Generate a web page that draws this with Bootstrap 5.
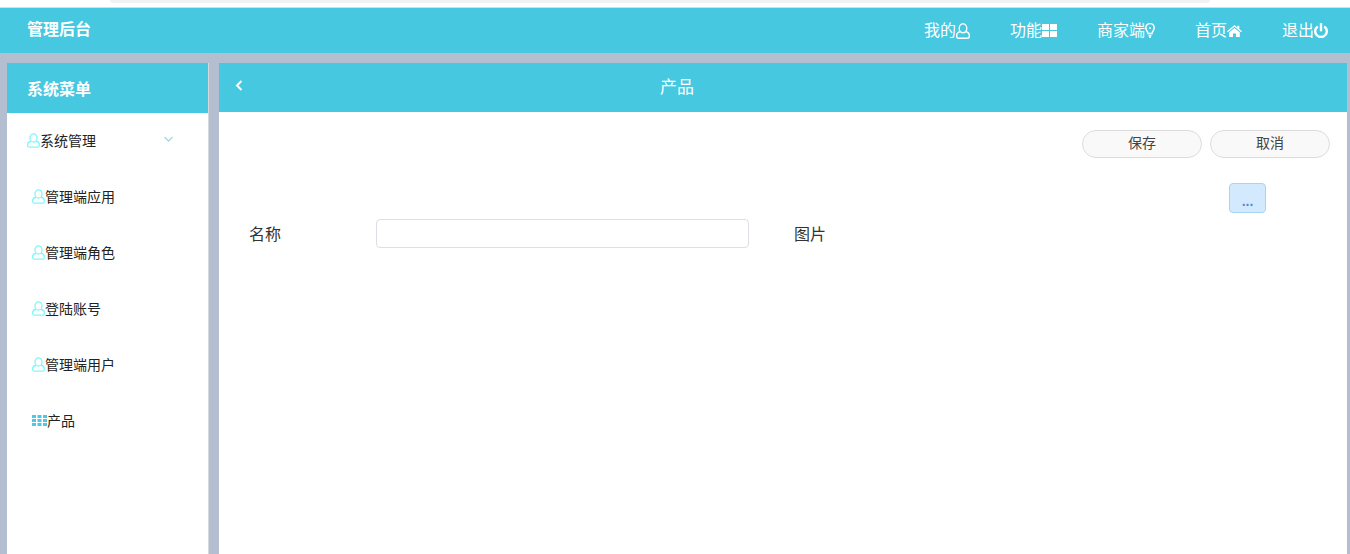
<!DOCTYPE html>
<html lang="zh-CN">
<head>
    <meta charset="UTF-8">
    <title>管理后台</title>
    <link rel="stylesheet" href="https://cdn.jsdelivr.net/npm/bootstrap@5.3.0/dist/css/bootstrap.min.css">
    <style>
        html, body { height: 554px; overflow: hidden; }
        body { background: #b3bfd1; font-family: "Liberation Sans", "Noto Sans CJK SC", sans-serif; color: #333; }
        .top-strip { height: 8px; background: #fff; border-bottom: 1px solid #d9dde0; }
        .top-tab { width: 1100px; height: 3px; margin-left: 110px; background: #f1f2f5; border-radius: 0 0 8px 8px; }
        .app-bar { height: 45px; background: #45c8e0; color: #fff; padding: 0 22px 0 27px; }
        .app-title { font-size: 16px; font-weight: 700; margin-bottom: 2px; }
        .app-links { gap: 40px; font-size: 16px; }
        .app-links svg { display: block; flex-shrink: 0; }
        .page-body { height: 501px; padding: 10px 3px 0 7px; gap: 10px; }
        .side-panel { width: 202px; background: #fff; border-right: 1px solid #d5d8dc; }
        .side-head { height: 50px; padding: 3px 0 0 20px; background: #45c8e0; color: #fff; font-size: 16px; font-weight: 700; }
        .side-item { height: 56px; font-size: 14px; color: #222; padding-left: 25px; }
        .side-item svg { flex-shrink: 0; margin-bottom: 2px; }
        .side-item.top-level { padding-left: 20px; padding-right: 35px; }
        .main-panel { background: #fff; min-width: 0; }
        .main-head { height: 49px; background: #45c8e0; color: #fff; font-size: 17px; padding-left: 16px; }
        .main-title { width: 868px; text-align: center; }
        .act-row { gap: 8px; padding: 18px 17px 0 0; }
        .pill-btn { width: 120px; height: 28px; padding: 0 0 2px; font-size: 14px; color: #444; background: #f9f9f9; border: 1px solid #dcdcdc; border-radius: 14px; }
        .form-area { padding: 25px 81px 0 30px; }
        .more-btn { width: 37px; height: 30px; padding: 5px 0 0; font-size: 14px; font-weight: 700; line-height: 1; color: #4a90d9; background: #d3e9fd; border: 1px solid #a9d3f5; border-radius: 4px; }
        .field-row { margin-top: 6px; }
        .field-label { font-size: 16px; color: #333; padding-top: 2px; }
        .name-label { width: 127px; }
        .name-input { width: 373px; height: 29px; padding: 4px 10px; border: 1px solid #dcdfe3; border-radius: 4px; }
        .pic-label { margin-left: 45px; }
    </style>
</head>
<body>
    <div class="top-strip"><div class="top-tab"></div></div>

    <div class="app-bar d-flex align-items-center justify-content-between">
        <div class="app-title">管理后台</div>
        <div class="app-links d-flex align-items-center">
            <div class="d-flex align-items-center">我的
                <svg width="14" height="16" viewBox="0 0 14 16" fill="none" stroke="#fff" stroke-width="1.400"><ellipse cx="7" cy="5.300" rx="3.800" ry="4.500"/><path d="M4.300 8.800C2 9.200 .7 10.500 .7 12.300v1c0 1 .7 1.900 1.800 1.900h9c1.100 0 1.800-.9 1.800-1.900v-1c0-1.800-1.300-3.100-3.600-3.500"/></svg>
            </div>
            <div class="d-flex align-items-center">功能
                <svg width="15" height="13" viewBox="0 0 15 13" fill="#fff"><rect width="7" height="6"/><rect x="8" width="7" height="6"/><rect y="7" width="7" height="6"/><rect x="8" y="7" width="7" height="6"/></svg>
            </div>
            <div class="d-flex align-items-center">商家端
                <svg width="10" height="15" viewBox="0 0 10 15" fill="none" stroke="#fff" stroke-width="1.500"><path d="M3 10.500C3 8.500.8 7.500.8 4.800a4.200 4.200 0 0 1 8.400 0C9.200 7.500 7 8.500 7 10.500z"/><path d="M3.500 12.500h3M4 14.300h2" stroke-width="1.700"/><circle cx="5" cy="5" r="1" fill="#fff" stroke="none"/></svg>
            </div>
            <div class="d-flex align-items-center">首页
                <svg width="15" height="12" viewBox="0 0 15 12" fill="#fff"><path d="M7.500 0 0 6.300l.8.900L7.500 1.700l6.700 5.500.8-.9-2.700-2.300V.8h-2v1.700z"/><path d="M2.200 7.200 7.500 2.900l5.300 4.300V12H9V8.500H6V12H2.200z"/></svg>
            </div>
            <div class="d-flex align-items-center">退出
                <svg width="14" height="15" viewBox="0 0 14 15" fill="none" stroke="#fff" stroke-width="2.400"><path d="M3.800 3.400a5.800 5.800 0 1 0 6.400 0"/><path d="M7 .8v6.400" stroke-linecap="round"/></svg>
            </div>
        </div>
    </div>

    <div class="page-body d-flex">
        <aside class="side-panel flex-shrink-0">
            <div class="side-head d-flex align-items-center">系统菜单</div>
            <div class="side-item top-level d-flex align-items-center">
                <svg width="13" height="15" viewBox="0 0 14 16" fill="none" stroke="#85f7f7" stroke-width="1.400"><ellipse cx="7" cy="5.300" rx="3.800" ry="4.500"/><path d="M4.300 8.800C2 9.200 .7 10.500 .7 12.300v1c0 1 .7 1.900 1.800 1.900h9c1.100 0 1.800-.9 1.800-1.900v-1c0-1.800-1.300-3.100-3.600-3.500"/></svg>
                <span>系统管理</span>
                <svg class="ms-auto mb-1" width="9" height="6" viewBox="0 0 9 6" fill="none" stroke="#9fd8e6" stroke-width="1.300"><path d="M.5 1 4.500 5l4-4"/></svg>
            </div>
            <div class="side-item d-flex align-items-center">
                <svg width="13" height="15" viewBox="0 0 14 16" fill="none" stroke="#85f7f7" stroke-width="1.400"><ellipse cx="7" cy="5.300" rx="3.800" ry="4.500"/><path d="M4.300 8.800C2 9.200 .7 10.500 .7 12.300v1c0 1 .7 1.900 1.800 1.900h9c1.100 0 1.800-.9 1.800-1.900v-1c0-1.800-1.300-3.100-3.600-3.500"/></svg>
                <span>管理端应用</span>
            </div>
            <div class="side-item d-flex align-items-center">
                <svg width="13" height="15" viewBox="0 0 14 16" fill="none" stroke="#85f7f7" stroke-width="1.400"><ellipse cx="7" cy="5.300" rx="3.800" ry="4.500"/><path d="M4.300 8.800C2 9.200 .7 10.500 .7 12.300v1c0 1 .7 1.900 1.800 1.900h9c1.100 0 1.800-.9 1.800-1.900v-1c0-1.800-1.300-3.100-3.600-3.500"/></svg>
                <span>管理端角色</span>
            </div>
            <div class="side-item d-flex align-items-center">
                <svg width="13" height="15" viewBox="0 0 14 16" fill="none" stroke="#85f7f7" stroke-width="1.400"><ellipse cx="7" cy="5.300" rx="3.800" ry="4.500"/><path d="M4.300 8.800C2 9.200 .7 10.500 .7 12.300v1c0 1 .7 1.900 1.800 1.900h9c1.100 0 1.800-.9 1.800-1.900v-1c0-1.800-1.300-3.100-3.600-3.500"/></svg>
                <span>登陆账号</span>
            </div>
            <div class="side-item d-flex align-items-center">
                <svg width="13" height="15" viewBox="0 0 14 16" fill="none" stroke="#85f7f7" stroke-width="1.400"><ellipse cx="7" cy="5.300" rx="3.800" ry="4.500"/><path d="M4.300 8.800C2 9.200 .7 10.500 .7 12.300v1c0 1 .7 1.900 1.800 1.900h9c1.100 0 1.800-.9 1.800-1.900v-1c0-1.800-1.300-3.100-3.600-3.500"/></svg>
                <span>管理端用户</span>
            </div>
            <div class="side-item d-flex align-items-center">
                <svg width="15" height="11" viewBox="0 0 15 11" fill="#4cc9e6"><rect width="4" height="3"/><rect x="5.500" width="4" height="3"/><rect x="11" width="4" height="3"/><rect y="4" width="4" height="3"/><rect x="5.500" y="4" width="4" height="3"/><rect x="11" y="4" width="4" height="3"/><rect y="8" width="4" height="3"/><rect x="5.500" y="8" width="4" height="3"/><rect x="11" y="8" width="4" height="3"/></svg>
                <span>产品</span>
            </div>
        </aside>

        <main class="main-panel flex-grow-1">
            <div class="main-head d-flex align-items-center">
                <svg class="mb-1 flex-shrink-0" width="8" height="11" viewBox="0 0 8 11" fill="none" stroke="#fff" stroke-width="2"><path d="M6.500 1 2 5.500 6.500 10"/></svg>
                <div class="main-title">产品</div>
            </div>
            <div class="act-row d-flex justify-content-end">
                <button type="button" class="btn pill-btn">保存</button>
                <button type="button" class="btn pill-btn">取消</button>
            </div>
            <div class="form-area">
                <div class="d-flex justify-content-end">
                    <button type="button" class="btn more-btn">...</button>
                </div>
                <div class="field-row d-flex align-items-center">
                    <label class="field-label name-label mb-0">名称</label>
                    <input type="text" class="form-control name-input">
                    <label class="field-label pic-label mb-0">图片</label>
                </div>
            </div>
        </main>
    </div>
</body>
</html>
